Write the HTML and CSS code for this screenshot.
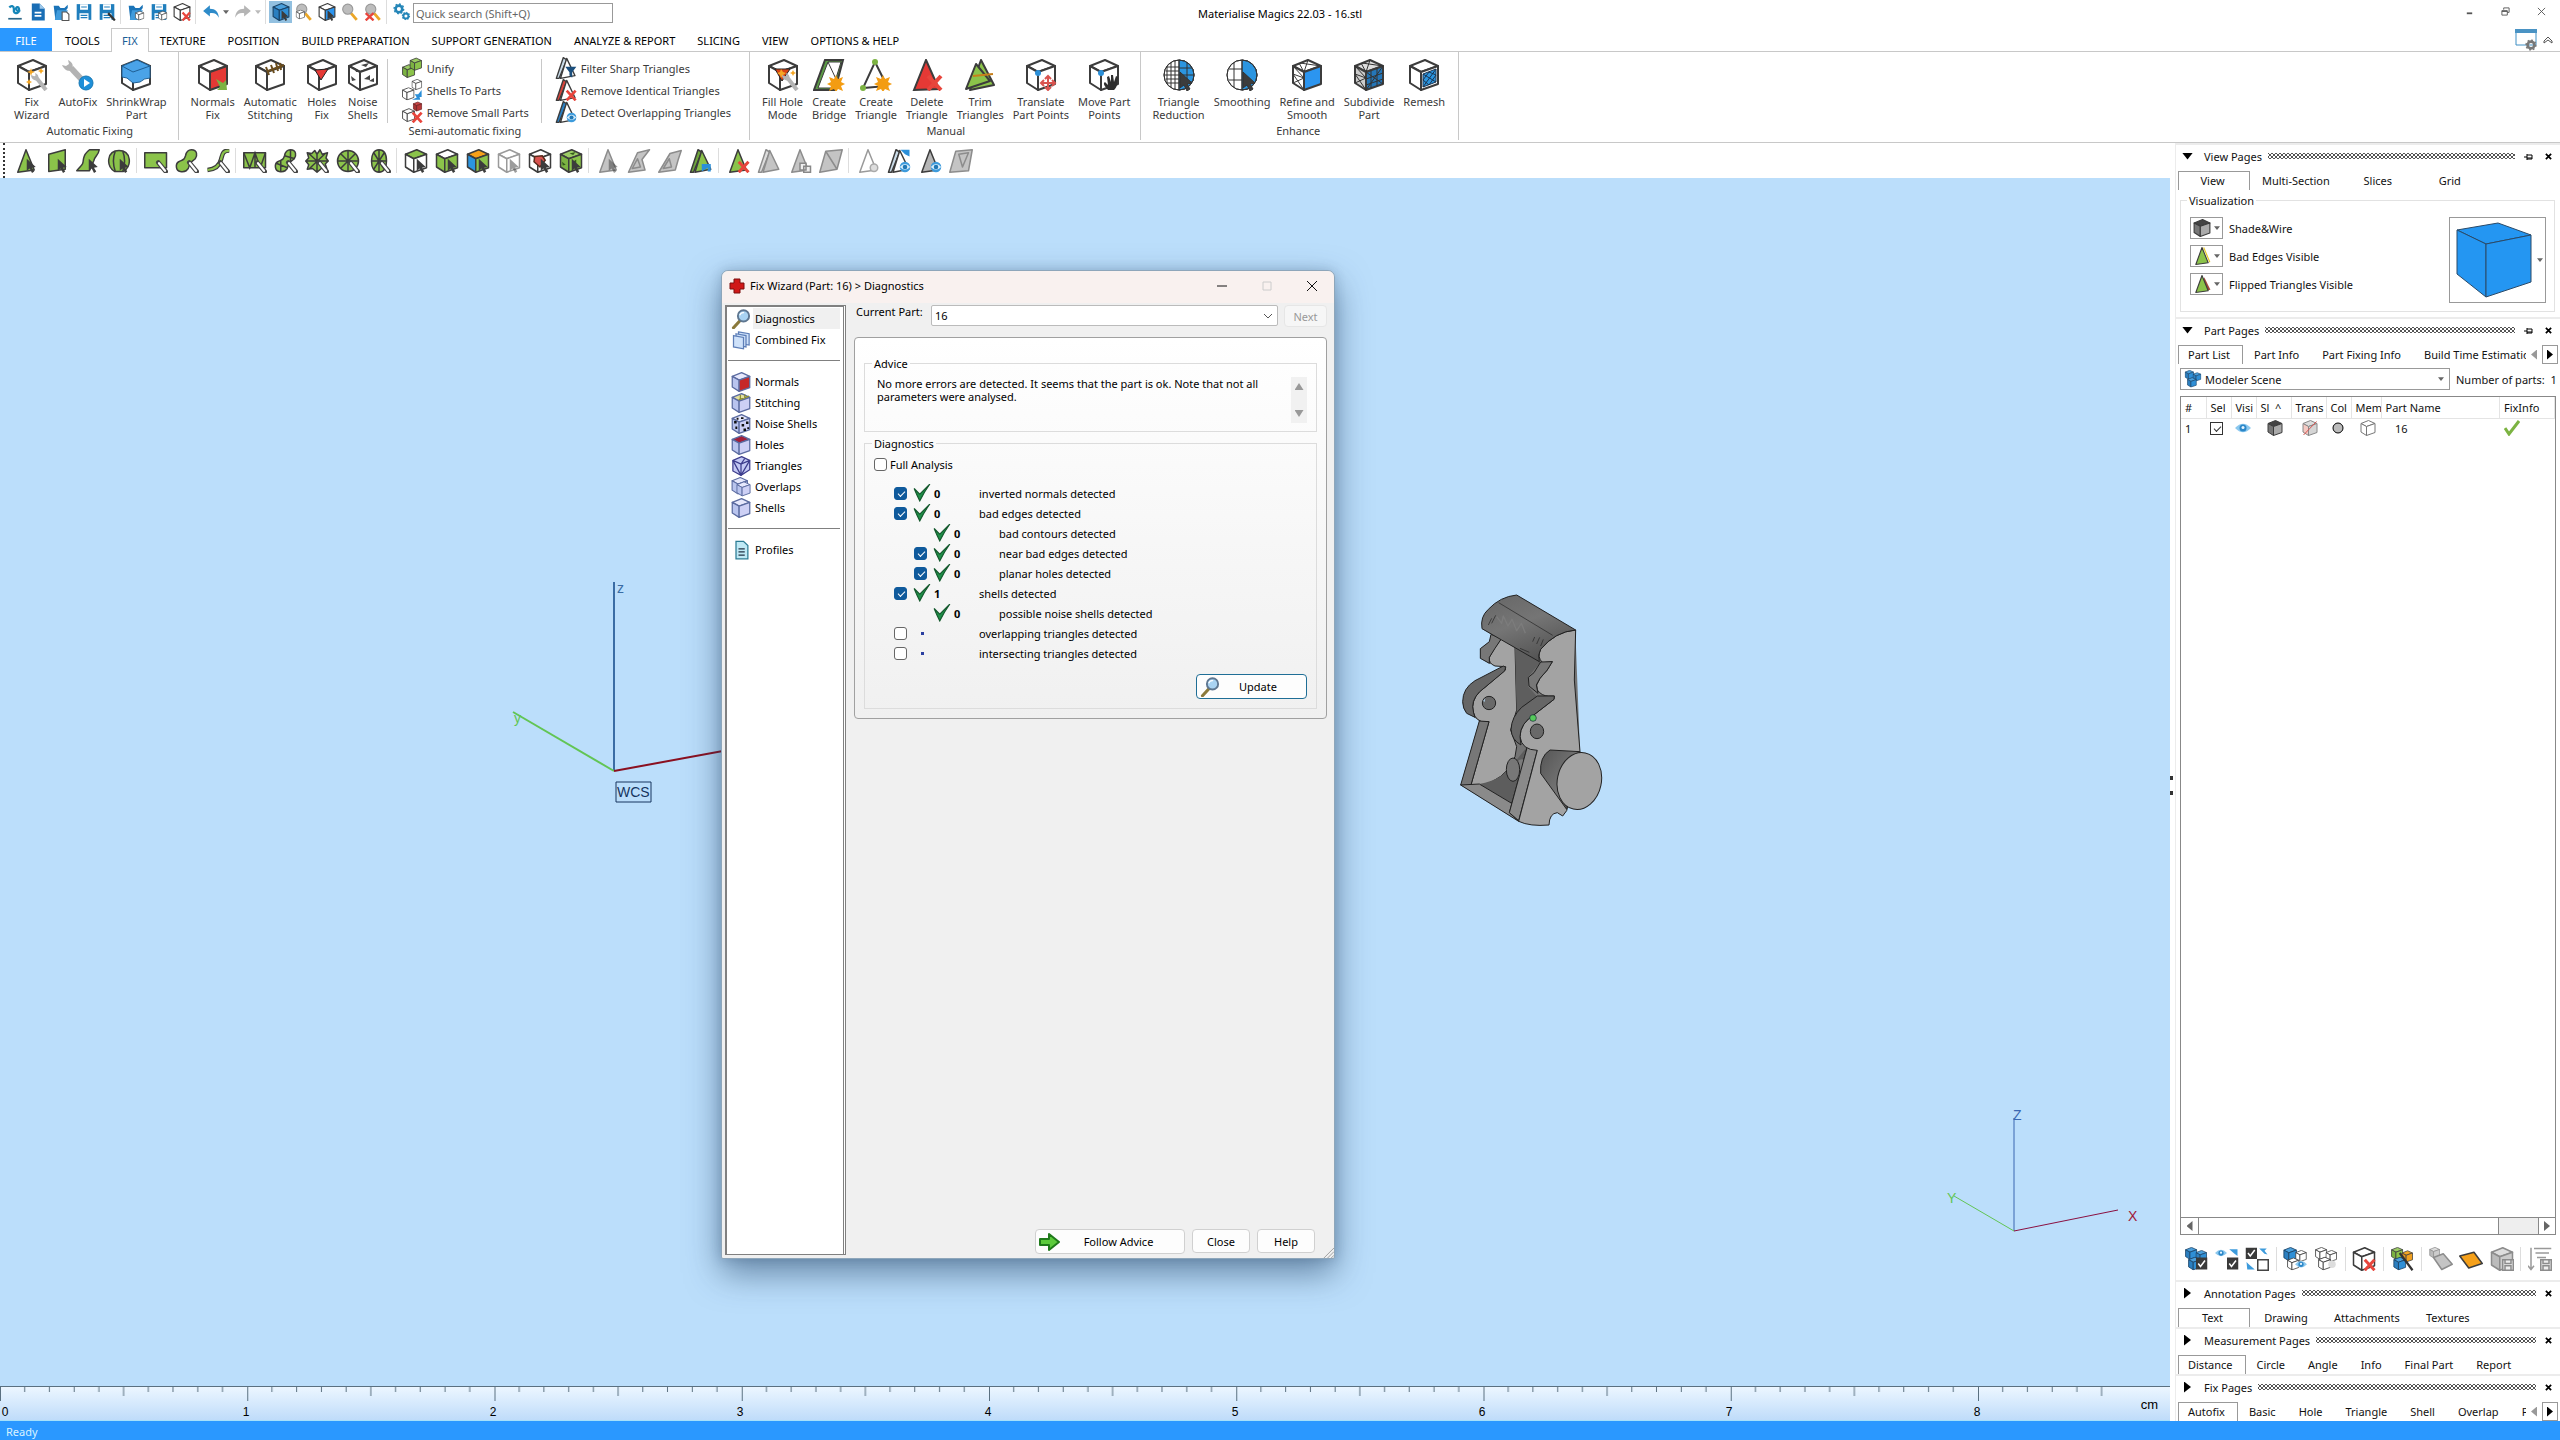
FILE: index.html
```html
<!DOCTYPE html>
<html lang="en">
<head>
  <meta charset="UTF-8" />
  <meta name="viewport" content="width=device-width, initial-scale=1" />
  <title>Materialise Magics 22.03 - 16.stl</title>
  <link rel="stylesheet" href="styles.css">
</head>
<body>

<!-- shared icon parts -->
<svg class="defs" aria-hidden="true">
  <symbol id="cube" viewBox="0 0 32 32">
    <path class="ft" d="M17 1 30 7 13 13 2 7z"/>
    <path class="fl" d="M2 7 13 13V31L2 24z"/>
    <path class="fr" d="M13 13 30 7V25L13 31z"/>
  </symbol>
  <symbol id="cubes" viewBox="0 0 32 32">
    <use href="#cube" x="1" y="0" width="17" height="17"/>
    <use href="#cube" x="15" y="4" width="16" height="16"/>
    <use href="#cube" x="5" y="13" width="18" height="18"/>
  </symbol>
  <symbol id="cursor" viewBox="0 0 32 32"><path fill="#3c3c3c" d="M17 13V29l4-3 3 6 3-2-3-5 5-1z"/></symbol>
  <symbol id="brush" viewBox="0 0 32 32"><path d="M19 18 29 30" stroke="#444" stroke-width="6" stroke-linecap="round"/><path d="M20 19 28 29" stroke="#fff" stroke-width="3" stroke-linecap="round"/></symbol>
  <symbol id="redx" viewBox="0 0 32 32"><path d="M17 17 30 31M30 17 17 31" stroke="#e8453c" stroke-width="4"/></symbol>
  <symbol id="burst" viewBox="0 0 32 32"><path fill="#f39c12" d="m23 16 2 4 5-2-2 5 4 2-4 2 2 5-5-2-2 3-2-3-5 2 2-5-4-2 4-2-2-5 5 2z"/></symbol>
  <symbol id="wrench" viewBox="0 0 32 32"><path d="M19 17 30 31" stroke="#b5b5b5" stroke-width="4"/><path d="M15 16c0 5 6 7 7 4s0-5-3-6l1 4z" fill="#b5b5b5"/></symbol>
  <symbol id="eye" viewBox="0 0 32 32"><path d="M0 16Q16-1 32 16 16 33 0 16z" fill="#8cc8ee"/><circle cx="16" cy="16" r="7" fill="#2b87c8"/><circle cx="16" cy="15" r="3" fill="#e8f5ff"/></symbol>
  <symbol id="eyeball" viewBox="0 0 32 32"><circle cx="24" cy="24" r="7" fill="#3d9bdc"/><path d="M17 24q7-8 14 0-7 7-14 0z" fill="#d6ecfa"/><circle cx="24" cy="24" r="3" fill="#2178b5"/></symbol>
  <symbol id="glass" viewBox="0 0 32 32"><path d="M15 18 4 30" stroke="#8b7a3c" stroke-width="5" stroke-linecap="round"/><circle cx="20" cy="11" r="9" fill="#a9d3f2" stroke="#5e7690" stroke-width="3"/><path d="M14 10q2-5 7-4" stroke="#fff" stroke-width="2" fill="none"/></symbol>
  <symbol id="zoomer" viewBox="0 0 32 32"><path d="M17 17 28 30" stroke="#eba627" stroke-width="5"/><circle cx="12" cy="11" r="9" fill="#bdbdbd" stroke="#999" stroke-width="2"/></symbol>
  <symbol id="tri" viewBox="0 0 32 32"><path class="fa" d="M16 1 27 28 5 31z"/></symbol>
  <symbol id="tri2" viewBox="0 0 32 32"><path class="fb" d="M12 1 2 31 6 31 17 4z"/><path class="fa" d="M17 2 29 27 8 31z"/></symbol>
  <symbol id="folder" viewBox="0 0 32 32"><path fill="#1b74b8" d="M3 5h9l3 4h7l6-6v6l-3 4v17H6z"/><path fill="#3f9bdc" d="M9 13h19l-6 17H5z"/></symbol>
  <symbol id="disk" viewBox="0 0 32 32"><path fill="#1f7ebd" d="M3 2h26v28H3z"/><path fill="#fff" d="M9 2h14v10H9zM8 18h16v12H8z"/><path d="M10 22h12M10 26h12M11 7h10" stroke="#1f7ebd" stroke-width="2"/></symbol>
  <symbol id="box" viewBox="0 0 32 32"><path d="M16 14h15v16H16z" fill="#3a3a3a"/><path d="m19 22 3 4 6-8" stroke="#fff" stroke-width="2" fill="none"/></symbol>
  <symbol id="floppy" viewBox="0 0 32 32"><path d="M17 17h14v14H17z" fill="#eee" stroke="#8c8c8c" stroke-width="2"/><path d="M20 17v5h8v-5M20 31v-6h8v6" fill="none" stroke="#8c8c8c" stroke-width="2"/></symbol>
  <symbol id="wheel" viewBox="0 0 32 32"><circle class="fa" cx="16" cy="16" r="14"/><path class="fa" d="M16 2V30M2 16H30M6 6 26 26M26 6 6 26"/></symbol>
  <symbol id="tick" viewBox="0 0 16 16"><path fill="#1e9048" stroke="#15592e" d="M1 4 6 9 15 0Q10 7 6 15 3 9 1 4z"/></symbol>
  <symbol id="gear" viewBox="0 0 32 32"><circle cx="16" cy="16" r="9" fill="none" stroke-width="7"/><circle cx="16" cy="16" r="13" fill="none" stroke-width="4" stroke-dasharray="5 5"/></symbol>
  <symbol id="pin" viewBox="0 0 9 9"><path d="M0 5h3M3 2v6M3 3h5v4H3M3 6h5" stroke="#000" fill="none"/></symbol>
  <symbol id="cross" viewBox="0 0 8 8"><path d="m1 1 6 6M7 1 1 7" stroke="#000" stroke-width="2"/></symbol>
  <symbol id="down" viewBox="0 0 8 5"><path d="M0 0h8L4 5z"/></symbol>
</svg>

<header class="titlebar">
  <div class="quick">
    <button aria-label="Magics"><svg class="i18" viewBox="0 0 32 32"><path d="M6 8c3-4 8-3 8 2v5c2 6 11 3 9-5-1-4-6-3-5 1s5 4 7 2" fill="none" stroke="#1586b8" stroke-width="4"/><path d="M4 28h24" stroke="#2b6686" stroke-width="3"/></svg></button>
    <button aria-label="New"><svg class="i18" viewBox="0 0 32 32"><path fill="#1a6eb5" d="M5 1h14l9 9v21H5z"/><path fill="#9fc9ea" d="M19 1v9h9z"/><path d="M10 17h12M10 23h12" stroke="#fff" stroke-width="3"/></svg></button>
    <button aria-label="Open"><svg class="i18" viewBox="0 0 32 32"><use href="#folder"/><path fill="#fff" stroke="#555" stroke-width="2" d="M18 16h8l4 4v11H18z"/></svg></button>
    <button aria-label="Save"><svg class="i18"><use href="#disk"/></svg></button>
    <button aria-label="Save as"><svg class="i18" viewBox="0 0 32 32"><use href="#disk"/><path d="m30 31-12-13" stroke="#333" stroke-width="4"/></svg></button>
    <i class="vsep"></i>
    <button aria-label="Import part"><svg class="i18" viewBox="0 0 32 32"><use href="#folder"/><use href="#cube" x="14" y="14" width="17" height="17"/></svg></button>
    <button aria-label="Save part"><svg class="i18" viewBox="0 0 32 32"><use href="#disk"/><use href="#cube" x="14" y="14" width="17" height="17"/></svg></button>
    <button aria-label="Unload part"><svg class="i18" viewBox="0 0 32 32"><use href="#cube"/><use href="#redx"/></svg></button>
    <i class="vsep"></i>
    <button class="drop" aria-label="Undo"><svg class="i18" viewBox="0 0 32 32"><path fill="#2e8bc9" d="M2 14 14 4v6c10 0 15 5 16 16-4-7-8-9-16-8v6z"/></svg><svg class="arr"><use href="#down"/></svg></button>
    <button class="drop off" aria-label="Redo"><svg class="i18" viewBox="0 0 32 32"><path fill="#b5b5b5" d="M30 14 18 4v6C8 10 3 15 2 26c4-7 8-9 16-8v6z"/></svg><svg class="arr"><use href="#down"/></svg></button>
    <i class="vsep"></i>
    <button class="on" aria-label="Select part"><svg class="i18 blue" viewBox="0 0 32 32"><use href="#cube"/><use href="#cursor"/></svg></button>
    <button aria-label="Zoom part"><svg class="i18" viewBox="0 0 32 32"><use href="#zoomer"/><use href="#cube" x="1" y="12" width="17" height="17"/></svg></button>
    <button aria-label="View cube"><svg class="i18 right-blue" viewBox="0 0 32 32"><use href="#cube"/><use href="#cursor"/></svg></button>
    <button aria-label="Zoom"><svg class="i18"><use href="#zoomer"/></svg></button>
    <button aria-label="Unzoom"><svg class="i18" viewBox="0 0 32 32"><use href="#zoomer"/><path d="m3 18 14 13M17 18 3 31" stroke="#e8453c" stroke-width="4"/></svg></button>
    <i class="vsep"></i>
    <button aria-label="Settings"><svg class="i18" viewBox="0 0 32 32" stroke="#2586b8"><use href="#gear" width="21" height="21"/><use href="#gear" x="15" y="15" width="16" height="16"/></svg></button>
    <input class="search" type="text" placeholder="Quick search (Shift+Q)" aria-label="Quick search">
  </div>
  <h1>Materialise Magics 22.03 - 16.stl</h1>
  <div class="winbtns">
    <button aria-label="Minimize"><svg viewBox="0 0 10 10"><path d="M2 7h6" stroke-width="2"/></svg></button>
    <button aria-label="Restore"><svg viewBox="0 0 10 10"><path d="M3 3V1h6v5H7M1 4h6v5H1zM1 5h6"/></svg></button>
    <button aria-label="Close"><svg viewBox="0 0 10 10"><path d="m1 1 8 8M9 1 1 9"/></svg></button>
  </div>
</header>

<nav class="menu">
  <a class="file" href="#">FILE</a>
  <a href="#">TOOLS</a>
  <a class="active" href="#">FIX</a>
  <a href="#">TEXTURE</a>
  <a href="#">POSITION</a>
  <a href="#">BUILD PREPARATION</a>
  <a href="#">SUPPORT GENERATION</a>
  <a href="#">ANALYZE &amp; REPORT</a>
  <a href="#">SLICING</a>
  <a href="#">VIEW</a>
  <a href="#">OPTIONS &amp; HELP</a>
  <div class="menu-right">
    <svg width="22" height="22" viewBox="0 0 22 22"><path d="M1 1h20v15H1z" fill="#fff" stroke="#3f8fc4"/><path d="M0 0h22v4H0z" fill="#4a93c4"/><g stroke="#777"><use href="#gear" x="10" y="10" width="12" height="12"/></g></svg>
    <svg width="10" height="8" viewBox="0 0 10 8"><path d="m1 5 4-4 4 4v2L5 4 1 7z" fill="#fff" stroke="#555"/></svg>
  </div>
</nav>

<section class="ribbon">
  <div class="group">
    <div class="tools">
      <button class="big"><svg class="i32" viewBox="0 0 32 32"><use href="#cube"/><path fill="#f5a623" d="m15 9 1 3 3 1-3 1-1 3-1-3-3-1 3-1zM25 9l1 2 2 1-2 1-1 2-1-2-2-1 2-1zM13 20l1 2 2 1-2 1-1 2-1-2-2-1 2-1z"/><use href="#wrench"/></svg>Fix<br>Wizard</button>
      <button class="big"><svg class="i32" viewBox="0 0 32 32"><path d="M9 9 22 23" stroke="#b3b3b3" stroke-width="6"/><path d="M6 1c4 2 6 5 4 9S2 11 0 6l4 1 3-2z" fill="#b3b3b3"/><circle cx="24" cy="24" r="7" fill="#1e8fd8" stroke="#1678b5"/><path fill="#fff" d="m22 20 6 4-6 4z"/></svg>AutoFix</button>
      <button class="big"><svg class="i32" viewBox="0 0 32 32"><use href="#cube"/><path d="M17 1 30 7V19Q24 19 20 23L13 24 7 19 2 18V7z" fill="#4aa3e8" stroke="#1f5f94"/><path d="m2 7 11 6 17-6" fill="none" stroke="#1f5f94"/></svg>ShrinkWrap<br>Part</button>
    </div>
    <div class="caption">Automatic Fixing</div>
  </div>

  <div class="group">
    <div class="tools">
      <button class="big"><svg class="i32 right-red" viewBox="0 0 32 32"><use href="#cube"/><path fill="#7cb342" d="m19 20 7 4 3-3 1 10H20l3-3z"/></svg>Normals<br>Fix</button>
      <button class="big"><svg class="i32" viewBox="0 0 32 32"><use href="#cube"/><path d="M14 12 30 6M12 8l3 8M17 6l3 8M22 4l2 8M26 4l1 7" stroke="#6b4d1d" stroke-width="2"/></svg>Automatic<br>Stitching</button>
      <button class="big"><svg class="i32" viewBox="0 0 32 32"><use href="#cube"/><path d="M9 11 22 10 15 21z" fill="#e53935" stroke="#222"/></svg>Holes<br>Fix</button>
      <button class="big"><svg class="i32" viewBox="0 0 32 32"><use href="#cube"/><path fill="#444" d="m14 6 8-2-3 4zM4 17l5 4-4 1zM17 20l6-4v5zM22 22l5-3v4zM8 10l4 3H9z"/></svg>Noise<br>Shells</button>
      <i class="tsep"></i>
      <div class="stack">
        <button><svg class="i22 green" viewBox="0 0 32 32"><use href="#cube" x="1" y="10" width="20" height="21"/><use href="#cube" x="12" y="0" width="19" height="21"/></svg>Unify</button>
        <button><svg class="i22" viewBox="0 0 32 32"><use href="#cube" x="15" y="0" width="16" height="16"/><use href="#cube" x="1" y="12" width="19" height="19"/><path fill="#2b8fd8" d="M30 16v10h-3l1 4H16l7-3-3-5h5z"/></svg>Shells To Parts</button>
        <button><svg class="i22" viewBox="0 0 32 32"><use href="#cube" x="1" y="10" width="20" height="21"/><g class="red"><use href="#cube" x="17" y="0" width="14" height="16"/></g><use href="#redx"/></svg>Remove Small Parts</button>
      </div>
      <i class="tsep"></i>
      <div class="stack">
        <button><svg class="i22 light" viewBox="0 0 32 32"><use href="#tri2"/><path fill="#1b4f7d" d="M15 14h16l-6 8v8l-4-3v-5z"/></svg>Filter Sharp Triangles</button>
        <button><svg class="i22 redb" viewBox="0 0 32 32"><use href="#tri2"/><use href="#redx"/></svg>Remove Identical Triangles</button>
        <button><svg class="i22 blueb" viewBox="0 0 32 32"><use href="#tri2"/><use href="#eyeball"/></svg>Detect Overlapping Triangles</button>
      </div>
    </div>
    <div class="caption">Semi-automatic fixing</div>
  </div>

  <div class="group">
    <div class="tools">
      <button class="big"><svg class="i32" viewBox="0 0 32 32"><use href="#cube"/><path d="M8 10 23 10 15 22z" fill="#d84315" stroke="#222"/><path fill="#f5a623" d="m14 10 2 3 3 1-3 2-2 3-1-3-3-2 3-1zM26 11l1 2 2 1-2 1-1 2-1-2-2-1 2-1z"/><use href="#wrench"/></svg>Fill Hole<br>Mode</button>
      <button class="big"><svg class="i32" viewBox="0 0 32 32"><path d="M12 1h18l-8 30H1z" fill="#5c9c46" stroke="#3c3c3c" stroke-width="2"/><path d="M15 3h13l-8 26H5z" fill="#fff" stroke="#3c3c3c"/><path d="m15 3 8 17" stroke="#3c3c3c"/><use href="#burst"/></svg>Create<br>Bridge</button>
      <button class="big"><svg class="i32" viewBox="0 0 32 32"><path d="M15 3 27 27 3 29z" fill="#fff" stroke="#3c3c3c" stroke-width="2"/><g fill="#7cb342"><circle cx="15" cy="3" r="3"/><circle cx="3" cy="29" r="3"/></g><use href="#burst"/></svg>Create<br>Triangle</button>
      <button class="big"><svg class="i32" viewBox="0 0 32 32"><path d="M15 1 28 30 3 31z" fill="#e53935" stroke="#3c3c3c" stroke-width="2"/><use href="#redx"/></svg>Delete<br>Triangle</button>
      <button class="big"><svg class="i32 green" viewBox="0 0 32 32"><path class="fa" d="M17 1 30 26 6 31z"/><path class="fa" d="M12 5 26 22 2 30z"/><path d="M9 17l20-2" stroke="#c77f1a" stroke-width="2"/></svg>Trim<br>Triangles</button>
      <button class="big"><svg class="i32" viewBox="0 0 32 32"><use href="#cube"/><circle cx="13" cy="14" r="3" fill="#2b8fd8"/><path d="M23 17v14M16 24h14M20 20l3-3 3 3M20 28l3 3 3-3M19 21l-3 3 3 3M27 21l3 3-3 3" stroke="#d9534f" stroke-width="2" fill="none"/></svg>Translate<br>Part Points</button>
      <button class="big"><svg class="i32" viewBox="0 0 32 32"><use href="#cube"/><circle cx="13" cy="14" r="3" fill="#2b8fd8"/><path fill="#2e2e2e" d="M20 31c-2-3-6-6-3-8l3 3-1-8 2-1 2 6 0-7h2l1 7 2-6 2 1-1 8c-1 3-2 4-3 5z"/></svg>Move Part<br>Points</button>
    </div>
    <div class="caption">Manual</div>
  </div>

  <div class="group">
    <div class="tools">
      <button class="big"><svg class="i32 grid" viewBox="0 0 32 32"><circle cx="16" cy="16" r="15" fill="#fff"/><path d="M16 1a15 15 0 0 1 0 30z" fill="#2b95e0"/><path d="M16 1V31M1 16H31M8 4V28M12 2V30M4 8v16M3 8h13M3 12h13M3 20h13M3 24h13M24 4v24M16 9h13M16 23h13" fill="none"/><circle cx="16" cy="16" r="15" fill="none"/><use href="#cursor"/></svg>Triangle<br>Reduction</button>
      <button class="big"><svg class="i32 grid" viewBox="0 0 32 32"><circle cx="16" cy="16" r="15" fill="#fff"/><path d="M16 1a15 15 0 0 1 0 30z" fill="#2b95e0"/><path d="M16 1V31M8 4V28M3 10h13M3 21h13" fill="none"/><circle cx="16" cy="16" r="15" fill="none"/><use href="#cursor"/></svg>Smoothing</button>
      <button class="big"><svg class="i32 right-blue" viewBox="0 0 32 32"><use href="#cube"/><path d="M17 1 13 13 8 4M30 7 9 4M2 7l11 12L2 15 13 31M2 24l11-5" stroke="#3c3c3c" fill="none"/></svg>Refine and<br>Smooth</button>
      <button class="big"><svg class="i32 right-navy" viewBox="0 0 32 32"><use href="#cube"/><path d="M17 1 13 13 8 4M30 7 9 4M2 7l11 12L2 15 13 31M2 24l11-5M13 20 30 14M13 26l17-6M18 11v18M24 9v18M13 13l17 12M13 31 30 7" stroke="#333" fill="none"/></svg>Subdivide<br>Part</button>
      <button class="big"><svg class="i32" viewBox="0 0 32 32"><use href="#cube"/><path d="m15 15 13-5v13l-13 5z" fill="#2b95e0" stroke="#1b3550"/><path d="m15 15 13 8M15 28l13-18M21 13l-6 8 6 5 7-10z" stroke="#1b3550" fill="none"/></svg>Remesh</button>
    </div>
    <div class="caption">Enhance</div>
  </div>
</section>

<main class="workspace">
  <div class="left">
    <div class="toolbar">
      <button aria-label="Mark triangle"><svg class="i24 green" viewBox="0 0 32 32"><use href="#tri"/><use href="#cursor"/></svg></button>
      <button aria-label="Mark plane"><svg class="i24 green" viewBox="0 0 32 32"><path class="fa" d="M5 7 27 1V27L5 30z"/><use href="#cursor"/></svg></button>
      <button aria-label="Mark surface"><svg class="i24 green" viewBox="0 0 32 32"><path class="fa" d="M18 1h13C30 8 25 10 24 15l-6 14H1c7-9 8-6 9-16 1-6 4-9 8-12z"/><use href="#cursor"/></svg></button>
      <button aria-label="Mark shell"><svg class="i24 green" viewBox="0 0 32 32"><path class="fa" d="M10 30C-2 22 0 2 16 2s18 20 6 28z"/><path class="fa" d="M11 3c-4 10-3 18 0 27M21 3c4 10 3 18 0 27"/><use href="#cursor"/></svg></button>
      <i class="vsep"></i>
      <button aria-label="Rectangle mark"><svg class="i24 green" viewBox="0 0 32 32"><path class="fa" d="M1 5h29v20H1z"/><use href="#brush"/></svg></button>
      <button aria-label="Free form mark"><svg class="i24 green" viewBox="0 0 32 32"><path class="fa" d="M22 1c8 0 8 8 5 12-4 4-6 3-8 9-1 7-6 9-12 8s-7-10-2-13c6-3 7-2 9-8 1-5 4-8 8-8z"/><use href="#brush"/></svg></button>
      <button aria-label="Line mark"><svg class="i24 green" viewBox="0 0 32 32"><path d="M31 2C22 2 22 7 20 14 18 23 12 27 2 28" fill="none" stroke="#3c3c3c" stroke-width="6"/><path d="M31 2C22 2 22 7 20 14 18 23 12 27 2 28" fill="none" stroke="#8bc34a" stroke-width="3"/><use href="#brush"/></svg></button>
      <i class="vsep"></i>
      <button aria-label="Window triangles"><svg class="i24 green" viewBox="0 0 32 32"><path class="fa" d="M1 5h29v20H1z"/><path d="M1 5l8 20 7-20 7 20 7-20M16 5v20" fill="none" stroke="#3c3c3c" stroke-width="2"/><use href="#brush"/></svg></button>
      <button aria-label="Free form triangles"><svg class="i24 green" viewBox="0 0 32 32"><path class="fa" d="M22 1c8 0 8 8 5 12-4 4-6 3-8 9-1 7-6 9-12 8s-7-10-2-13c6-3 7-2 9-8 1-5 4-8 8-8zM14 9l14 4M3 19l15 6M22 1v16M9 15v15"/><use href="#brush"/></svg></button>
      <button aria-label="Star mark"><svg class="i24 green" viewBox="0 0 32 32"><path class="fa" d="m16 7 4-6 3 6 7-2-2 7 3 4-4 4 2 6-6-1-7 6-6-5-7 1 2-6-4-5 4-4-2-7 6 1 4-4zM5 6l22 20M27 6 5 27M16 7v24M2 16h29"/><use href="#brush"/></svg></button>
      <button aria-label="Circle mark"><svg class="i24 green" viewBox="0 0 32 32"><use href="#wheel"/><use href="#brush"/></svg></button>
      <button aria-label="Ellipse mark"><svg class="i24 green" viewBox="0 0 32 32"><path class="fa" d="M16 1C24 1 26 8 26 16s-3 15-10 15S6 24 6 16 9 1 16 1zM16 1v30M6 16h20M9 5l14 22M23 5 9 27"/><use href="#brush"/></svg></button>
      <i class="vsep"></i>
      <button aria-label="Mark top"><svg class="i24 top-green" viewBox="0 0 32 32"><use href="#cube"/><use href="#cursor"/></svg></button>
      <button aria-label="Mark side"><svg class="i24 side-green" viewBox="0 0 32 32"><use href="#cube"/><use href="#cursor"/></svg></button>
      <button aria-label="Mark by color"><svg class="i24 multi" viewBox="0 0 32 32"><use href="#cube"/><use href="#cursor"/></svg></button>
      <button aria-label="Unmark"><svg class="i24 ghost" viewBox="0 0 32 32"><use href="#cube"/><use href="#cursor"/></svg></button>
      <button aria-label="Mark holes"><svg class="i24" viewBox="0 0 32 32"><use href="#cube"/><path fill="#d9534f" stroke="#5a2a1a" stroke-width="2" d="m9 10 10-1 4 6-7 9-8-7z"/><use href="#cursor"/></svg></button>
      <button aria-label="Mark noise"><svg class="i24 green" viewBox="0 0 32 32"><use href="#cube"/><path fill="#345c1c" d="m14 6 8-2-3 4zM4 17l5 4-4 1zM17 18l6-4v5z"/><use href="#cursor"/></svg></button>
      <i class="vsep"></i>
      <button aria-label="Unmark triangle"><svg class="i24 gray" viewBox="0 0 32 32"><use href="#tri"/><use href="#cursor"/></svg></button>
      <button aria-label="Grow"><svg class="i24 gray" viewBox="0 0 32 32"><path class="fa" d="M14 5 30 1 20 14l4 14-22 3z"/><path class="fa" d="m14 13 4 11-11 2z"/></svg></button>
      <button aria-label="Shrink"><svg class="i24 gray" viewBox="0 0 32 32"><path class="fa" d="M16 6 31 2 27 14l-4 14-22 3z"/><path class="fa" d="m15 13 3 11-11 2z"/></svg></button>
      <button aria-label="Invert marking"><svg class="i24 green" viewBox="0 0 32 32"><use href="#tri2"/><path fill="#2b8fd8" d="M17 20h12v10h-4v-5l-8 5z"/></svg></button>
      <i class="vsep"></i>
      <button aria-label="Delete marked"><svg class="i24 green" viewBox="0 0 32 32"><use href="#tri"/><use href="#redx"/></svg></button>
      <button aria-label="Separate"><svg class="i24 gray" viewBox="0 0 32 32"><use href="#tri2"/></svg></button>
      <button aria-label="Copy marked"><svg class="i24 gray" viewBox="0 0 32 32"><use href="#tri"/><path d="M16 19h8v9h-8zM21 23h9v8h-9z" fill="#eee" stroke="#888" stroke-width="2"/></svg></button>
      <button aria-label="Divide"><svg class="i24 gray" viewBox="0 0 32 32"><path class="fa" d="M9 3 31 1 24 27 1 31zM9 3l15 24"/></svg></button>
      <i class="vsep"></i>
      <button aria-label="Hide"><svg class="i24 ghost" viewBox="0 0 32 32"><use href="#tri"/><circle cx="24" cy="25" r="5" fill="#ddd" stroke="#aaa" stroke-width="2"/></svg></button>
      <button aria-label="Invert visibility"><svg class="i24 light" viewBox="0 0 32 32"><use href="#tri2"/><path fill="#2b8fd8" d="M18 1h12v9l-6-3z"/><use href="#eyeball"/></svg></button>
      <button aria-label="Show"><svg class="i24 mid" viewBox="0 0 32 32"><use href="#tri"/><use href="#eyeball"/></svg></button>
      <button aria-label="Show all"><svg class="i24 gray" viewBox="0 0 32 32"><path class="fa" d="M9 3 31 1 26 29 1 31z"/><path class="fa" d="m13 7 13-2-8 19z"/></svg></button>
    </div>

    <div class="viewport">
      <svg class="wcs" viewBox="0 0 260 220">
        <path d="M103 189V0" stroke="#3a6ca4" stroke-width="2"/>
        <path d="M103 189 2 130" stroke="#62c554" stroke-width="2"/>
        <path d="M103 189 250 162" stroke="#8a1020" stroke-width="2"/>
        <text x="106" y="11" fill="#3a6ca4">z</text>
        <text x="3" y="141" fill="#62c554">y</text>
        <text x="106" y="215" fill="#16355e">WCS</text>
        <path d="M105 200h35v20h-35z" fill="none" stroke="#16355e"/>
      </svg>

      <svg class="model" viewBox="0 0 660 840">
        <defs>
          <linearGradient id="roll" x1="0" y1="0" x2="0.5" y2="1"><stop offset="0" stop-color="#666"/><stop offset="0.5" stop-color="#757575"/><stop offset="1" stop-color="#555"/></linearGradient>
          <linearGradient id="knob" x1="0" y1="0" x2="1" y2="1"><stop offset="0" stop-color="#555"/><stop offset="0.6" stop-color="#777"/><stop offset="1" stop-color="#444"/></linearGradient>
        </defs>
        <g stroke="#222" stroke-width="3" stroke-linejoin="round">
          <path fill="#747474" d="M186 176 213 193 208 215 181 236V265L210 282 250 290 160 337Q128 358 128 400 130 430 160 440L178 453 122 645 296 754 350 540 480 545 466 180z" stroke="none"/>
          <path fill="#a3a3a3" d="M245 205 285 232 290 420 272 480 290 530 285 560 262 600Q230 640 150 655L207 455H185Q158 445 158 410 160 375 195 352L256 300 257 290 225 288Q205 280 208 262L225 232z"/>
          <path fill="#5e5e5e" d="M285 232 362 276 325 320V350L352 380 300 420 290 425z" stroke="none"/>
          <path fill="#777" d="M213 193 245 205 225 235 208 262V280L181 265V236L208 215z"/>
          <path fill="#666" d="M250 288 257 292 254 303 195 352Q158 378 158 410 160 430 165 442L140 430Q128 415 128 395 128 355 165 332z"/>
          <circle cx="207" cy="399" r="20" fill="#696969"/>
          <path d="m190 392 6-7-3 12z" fill="#b9defa" stroke="none"/>
          <path fill="#777" d="M178 453 207 455 150 655 122 645z"/>
          <path fill="#5d5d5d" d="M178 642Q250 630 285 575L322 530 275 700z" stroke="none"/>
          <path fill="#8a8a8a" d="M122 645 178 642 275 700 350 540 322 530 268 728 296 754z"/>
          <ellipse cx="305" cy="598" rx="20" ry="30" fill="#7b7b7b" stroke="none"/>
          <ellipse cx="279" cy="599" rx="20" ry="35" fill="#777"/>
          <path fill="#8a8a8a" d="M322 530 352 540 296 752 268 728z"/>
          <path fill="#a3a3a3" d="M467 180Q405 185 362 238 350 262 368 278L397 275Q385 300 360 325L350 345 352 360Q365 378 385 378L403 378 402 388 345 432Q300 460 300 500 305 540 352 541L296 754Q330 770 387 765 388 730 412 728L428 738 440 722 480 545 463 330z"/>
          <path fill="#777" d="M362 276 397 275Q385 300 360 325L349 345 354 370 327 348 325 322 342 308z"/>
          <path fill="#666" d="M352 378 403 378 402 388 345 432Q300 460 300 500L303 525Q275 510 273 478 275 440 305 412z"/>
          <path fill="url(#roll)" d="M186 176Q180 140 205 118 240 80 290 75L467 180Q405 185 362 238 352 255 358 275L245 210z"/>
          <path d="M236 98 398 196M205 165l10-20M215 160l12-24M338 215l6-14M350 222l9-20M362 228l8-20M300 235l28 12" fill="none" stroke-width="2"/>
          <path d="m230 140 15 20 5-22 14 30 12-20 14 34 14-22 12 30" fill="none" stroke="#7c7c7c" stroke-width="4"/>
          <ellipse cx="351" cy="484" rx="20" ry="22" fill="#696969"/>
          <path fill="url(#knob)" d="M480 545 390 540Q358 560 362 610L440 718z"/>
          <ellipse cx="478" cy="633" rx="66" ry="86" fill="#a3a3a3" transform="rotate(12 478 633)"/>
        </g>
        <circle cx="339" cy="444" r="10" fill="#55c95a" stroke="#123" stroke-width="2"/>
      </svg>

      <svg class="gizmo" viewBox="0 0 200 130">
        <path d="M66 122V9" stroke="#3a66b0"/>
        <path d="M66 122 6 87" stroke="#62c554"/>
        <path d="M66 122 170 101" stroke="#8a1040"/>
        <text x="65" y="11" fill="#3a66b0">Z</text>
        <text x="-1" y="94" fill="#62c554">Y</text>
        <text x="180" y="112" fill="#a01838">X</text>
      </svg>

      <section class="dialog" aria-label="Fix Wizard">
        <div class="dlg-title">
          <svg width="16" height="16" viewBox="0 0 16 16"><path fill="#d01818" stroke="#7c0f0f" d="M5 1h6v4h4v6h-4v4H5v-4H1V5h4z"/></svg>
          <span>Fix Wizard (Part: 16) &gt; Diagnostics</span>
          <div class="dlg-btns">
            <button aria-label="Minimize"><svg viewBox="0 0 12 12"><path d="M1 6h10"/></svg></button>
            <button aria-label="Maximize" disabled><svg viewBox="0 0 12 12"><path d="M2 2h8v8H2z"/></svg></button>
            <button aria-label="Close"><svg viewBox="0 0 12 12"><path d="m1 1 10 10M11 1 1 11"/></svg></button>
          </div>
        </div>
        <div class="dlg-body">
          <nav class="steps">
            <a class="sel" href="#"><svg class="i20"><use href="#glass"/></svg><span>Diagnostics</span></a>
            <a href="#"><svg class="i20" viewBox="0 0 32 32" fill="#cfe2fa" stroke="#5e7fb8" stroke-width="2"><path d="M12 3 29 6V24L12 21z"/><path d="M8 6 24 9V27L8 24z"/><path d="M4 9 20 12V30L4 27z"/></svg><span>Combined Fix</span></a>
            <hr>
            <a href="#"><svg class="i20 lav lav-red"><use href="#cube"/></svg><span>Normals</span></a>
            <a href="#"><svg class="i20 lav lav-top" viewBox="0 0 32 32"><use href="#cube"/><path d="M12 11 29 5M15 3v8M22 2v8" stroke="#8f8f30" stroke-width="2"/></svg><span>Stitching</span></a>
            <a href="#"><svg class="i20 lav" viewBox="0 0 32 32"><use href="#cube"/><path fill="#111" d="M5 11h4v4H5zM7 20h3v4H7zM16 5h4v3h-4zM17 16h4v4h-4zM24 12h4v4h-4zM20 23h4v4h-4zM26 21h3v3h-3zM9 6h3v3H9z"/></svg><span>Noise Shells</span></a>
            <a href="#"><svg class="i20 lav lav-hole"><use href="#cube"/></svg><span>Holes</span></a>
            <a href="#"><svg class="i20 lav" viewBox="0 0 32 32" fill="none" stroke="#3c3c8c" stroke-width="2"><path fill="#c3c8f4" d="M17 1 30 7V22L16 31 3 24V7z"/><path d="M3 7 16 13 30 7M16 13V31L3 7M16 31 30 7M22 4 16 13"/></svg><span>Triangles</span></a>
            <a href="#"><svg class="i20 lav" viewBox="0 0 32 32"><use href="#cube" width="28" height="28"/><use href="#cube" x="8" y="6" width="24" height="26"/></svg><span>Overlaps</span></a>
            <a href="#"><svg class="i20 lav"><use href="#cube"/></svg><span>Shells</span></a>
            <hr>
            <a href="#"><svg class="i20" viewBox="0 0 32 32"><path d="M8 2h12l7 7v21H8z" fill="#bfe9f5" stroke="#2c7c94" stroke-width="2"/><path d="M12 14h10M12 19h10M12 24h10" stroke="#234" stroke-width="2"/></svg><span>Profiles</span></a>
          </nav>

          <div class="dlg-main">
            <div class="current">
              <label for="part">Current Part:</label>
              <div class="select-wrap">
                <select id="part"><option>16</option></select>
                <svg width="9" height="6" viewBox="0 0 9 6"><path d="m0 1 4 4 4-4" fill="none" stroke="#555"/></svg>
              </div>
              <button class="btn next" disabled>Next</button>
            </div>
            <div class="page">
              <fieldset class="advice">
                <legend>Advice</legend>
                <p>No more errors are detected. It seems that the part is ok. Note that not all parameters were analysed.</p>
                <div class="mini-scroll"><i class="up"></i><i></i></div>
              </fieldset>
              <fieldset class="diag">
                <legend>Diagnostics</legend>
                <label class="full"><input type="checkbox">Full Analysis</label>
                <div class="rows">
                  <label><input type="checkbox" checked><svg class="i18"><use href="#tick"/></svg><b>0</b>inverted normals detected</label>
                  <label><input type="checkbox" checked><svg class="i18"><use href="#tick"/></svg><b>0</b>bad edges detected</label>
                  <div class="row sub nobox"><svg class="i18"><use href="#tick"/></svg><b>0</b>bad contours detected</div>
                  <label class="sub"><input type="checkbox" checked><svg class="i18"><use href="#tick"/></svg><b>0</b>near bad edges detected</label>
                  <label class="sub"><input type="checkbox" checked><svg class="i18"><use href="#tick"/></svg><b>0</b>planar holes detected</label>
                  <label><input type="checkbox" checked><svg class="i18"><use href="#tick"/></svg><b>1</b>shells detected</label>
                  <div class="row sub nobox"><svg class="i18"><use href="#tick"/></svg><b>0</b>possible noise shells detected</div>
                  <label><input type="checkbox"><i class="dot"></i><b></b>overlapping triangles detected</label>
                  <label><input type="checkbox"><i class="dot"></i><b></b>intersecting triangles detected</label>
                </div>
                <button class="btn update"><svg class="i20"><use href="#glass"/></svg><span>Update</span></button>
              </fieldset>
            </div>
            <div class="dlg-foot">
              <button class="btn follow"><svg width="22" height="18" viewBox="0 0 22 18"><path fill="#5ccb3c" stroke="#1f7a1a" stroke-width="2" stroke-linejoin="round" d="M1 6h9V1l10 8-10 8v-5H1z"/></svg><span>Follow Advice</span></button>
              <button class="btn">Close</button>
              <button class="btn">Help</button>
            </div>
          </div>
        </div>
        <svg class="grip" viewBox="0 0 12 12"><path d="M1 12 12 1M5 12l7-7M9 12l3-3" stroke="#999"/></svg>
      </section>
    </div>

    <div class="ruler">
      <svg class="ticks">
        <defs>
          <pattern id="cm" width="247.25" height="34" patternUnits="userSpaceOnUse">
            <path d="M.5 0v14M24.7 0v5M49.4 0v5M74.2 0v5M98.9 0v5M123.6 0v9M148.3 0v5M173 0v5M197.8 0v5M222.5 0v5" stroke="#5a7080"/>
          </pattern>
        </defs>
        <rect width="2104" height="34" fill="url(#cm)"/>
        <text x="5" y="29">0</text>
        <text x="246" y="29">1</text>
        <text x="493" y="29">2</text>
        <text x="740" y="29">3</text>
        <text x="988" y="29">4</text>
        <text x="1235" y="29">5</text>
        <text x="1482" y="29">6</text>
        <text x="1729" y="29">7</text>
        <text x="1977" y="29">8</text>
      </svg>
      <span>cm</span>
    </div>
  </div>

  <aside class="panels">
    <section class="panel">
      <h2><i class="open"></i>View Pages<i class="dots"></i><svg class="pin"><use href="#pin"/></svg><svg class="x"><use href="#cross"/></svg></h2>
      <div class="tabs wide"><a class="active" href="#">View</a><a href="#">Multi-Section</a><a href="#">Slices</a><a href="#">Grid</a></div>
      <fieldset class="vis">
        <legend>Visualization</legend>
        <div class="vis-list">
          <div><button aria-label="Shading mode"><svg class="i18 dark"><use href="#cube"/></svg><svg class="arr"><use href="#down"/></svg></button>Shade&amp;Wire</div>
          <div><button aria-label="Bad edges"><svg class="i18 green" viewBox="0 0 32 32"><path d="M19 1 30 27" stroke="#e6c820" stroke-width="2"/><use href="#tri"/></svg><svg class="arr"><use href="#down"/></svg></button>Bad Edges Visible</div>
          <div><button aria-label="Flipped triangles"><svg class="i18 green" viewBox="0 0 32 32"><path d="M20 4 31 26 15 29z" fill="#a34a3a"/><use href="#tri"/></svg><svg class="arr"><use href="#down"/></svg></button>Flipped Triangles Visible</div>
        </div>
        <button class="orient" aria-label="Orientation">
          <svg width="76" height="76" viewBox="0 0 76 76" fill="#2496f2" stroke="#2a4a68" stroke-linejoin="round"><path d="M1 8 42 1 75 13 30 22z"/><path d="M1 8 30 22V75L1 52z"/><path d="M30 22 75 13V60L30 75z"/></svg>
          <svg class="arr"><use href="#down"/></svg>
        </button>
      </fieldset>
    </section>

    <section class="panel grow">
      <h2><i class="open"></i>Part Pages<i class="dots"></i><svg class="pin"><use href="#pin"/></svg><svg class="x"><use href="#cross"/></svg></h2>
      <div class="tabs"><a class="active" href="#">Part List</a><a href="#">Part Info</a><a href="#">Part Fixing Info</a><a class="cut" href="#">Build Time Estimation</a><div class="pager"><button disabled aria-label="Previous"><i class="prev"></i></button><button aria-label="Next"><i></i></button></div></div>
      <div class="scene">
        <div class="combo">
          <svg class="i18 blue"><use href="#cubes"/></svg>
          <select aria-label="Scene"><option>Modeler Scene</option></select>
          <svg class="arr"><use href="#down"/></svg>
        </div>
        <span>Number of parts:&nbsp; 1</span>
      </div>
      <div class="list">
        <table>
          <colgroup><col class="c25"><col class="c25"><col class="c25"><col class="c35"><col class="c35"><col class="c25"><col class="c30"><col><col class="c55"></colgroup>
          <thead><tr><th>#</th><th>Sel</th><th>Visi</th><th>Sl&nbsp; ^</th><th>Trans</th><th>Col</th><th>Mem</th><th>Part Name</th><th>FixInfo</th></tr></thead>
          <tbody><tr>
            <td>1</td>
            <td><input type="checkbox" checked aria-label="Select part 16"></td>
            <td><svg class="i16"><use href="#eye"/></svg></td>
            <td class="mid-cell"><svg class="i16 dark"><use href="#cube"/></svg></td>
            <td class="mid-cell"><svg class="i16 pale" viewBox="0 0 32 32"><use href="#cube"/><path d="M3 30 29 3" stroke="#d9534f" stroke-width="2"/></svg></td>
            <td><svg class="i16" viewBox="0 0 16 16"><circle cx="8" cy="8" r="5" fill="#bbb" stroke="#000"/></svg></td>
            <td class="mid-cell"><svg class="i16 thin"><use href="#cube"/></svg></td>
            <td class="name">16</td>
            <td><svg class="i16" viewBox="0 0 16 16"><path d="m1 8 4 6L15 1" fill="none" stroke="#7cb342" stroke-width="3"/></svg></td>
          </tr></tbody>
        </table>
        <div class="hscroll"><button aria-label="Scroll left"><i class="prev"></i></button><span></span><button aria-label="Scroll right"><i></i></button></div>
      </div>
      <div class="part-tools">
        <button aria-label="Select all"><svg class="i24 blue" viewBox="0 0 32 32"><use href="#cubes"/><use href="#box"/></svg></button>
        <button aria-label="Select visible"><svg class="i24" viewBox="0 0 32 32"><use href="#eye" width="16" height="16"/><path fill="#3d9bdc" d="M19 3h11v9l-4-3z"/><use href="#box"/></svg></button>
        <button aria-label="Invert selection"><svg class="i24" viewBox="0 0 32 32"><path fill="#3a3a3a" d="M1 1h15v15H1z"/><path d="m4 8 3 4 6-8" stroke="#fff" stroke-width="2" fill="none"/><path d="M17 17h14v14H17z" fill="#fff" stroke="#444" stroke-width="2"/><path fill="#3d9bdc" d="M19 2h10l-3 3 4 5-4-1zM2 20l3 3 8 7H3z"/></svg></button>
        <i class="vsep"></i>
        <button aria-label="Show selected"><svg class="i24" viewBox="0 0 32 32"><g class="blue"><use href="#cube" x="0" y="0" width="19" height="19"/></g><use href="#cube" x="16" y="4" width="16" height="16"/><use href="#cube" x="5" y="14" width="17" height="17"/><use href="#eye" x="16" y="15" width="16" height="16"/></svg></button>
        <button aria-label="Hide selected"><svg class="i24" viewBox="0 0 32 32"><use href="#cubes"/><circle cx="24" cy="23" r="5" fill="#ddd"/></svg></button>
        <i class="vsep"></i>
        <button aria-label="Unload"><svg class="i24" viewBox="0 0 32 32"><use href="#cube"/><use href="#redx"/></svg></button>
        <i class="vsep"></i>
        <button aria-label="Color parts"><svg class="i24" viewBox="0 0 32 32"><g class="green"><use href="#cube" x="1" y="0" width="17" height="17"/></g><g class="orange"><use href="#cube" x="15" y="4" width="16" height="17"/></g><g class="blue"><use href="#cube" x="4" y="13" width="18" height="18"/></g><path d="m13 8 17 23" stroke="#333" stroke-width="3"/></svg></button>
        <i class="vsep"></i>
        <button aria-label="Duplicate"><svg class="i24 gray" viewBox="0 0 32 32"><use href="#cube" width="15" height="15"/><path class="fa" d="m6 14 13-5 12 14-14 7z"/></svg></button>
        <button aria-label="Platform"><svg class="i24 orange" viewBox="0 0 32 32"><path class="fa" d="m1 12 19-5 11 15-18 6z"/></svg></button>
        <button aria-label="Save part"><svg class="i24 gray" viewBox="0 0 32 32"><use href="#cube"/><use href="#floppy"/></svg></button>
        <i class="vsep"></i>
        <button aria-label="Save list"><svg class="i24" viewBox="0 0 32 32"><path d="M4 1v28M0 25l4 5 4-5M8 2h23M10 8h18M12 14h12" stroke="#999" stroke-width="2" fill="none"/><use href="#floppy"/></svg></button>
      </div>
    </section>

    <section class="panel">
      <h2><i class="closed"></i>Annotation Pages<i class="dots"></i><svg class="x"><use href="#cross"/></svg></h2>
      <div class="tabs wide"><a class="active" href="#">Text</a><a href="#">Drawing</a><a href="#">Attachments</a><a href="#">Textures</a></div>
    </section>
    <section class="panel">
      <h2><i class="closed"></i>Measurement Pages<i class="dots"></i><svg class="x"><use href="#cross"/></svg></h2>
      <div class="tabs"><a class="active" href="#">Distance</a><a href="#">Circle</a><a href="#">Angle</a><a href="#">Info</a><a href="#">Final Part</a><a href="#">Report</a></div>
    </section>
    <section class="panel">
      <h2><i class="closed"></i>Fix Pages<i class="dots"></i><svg class="x"><use href="#cross"/></svg></h2>
      <div class="tabs"><a class="active" href="#">Autofix</a><a href="#">Basic</a><a href="#">Hole</a><a href="#">Triangle</a><a href="#">Shell</a><a href="#">Overlap</a><a class="cut" href="#">P</a><div class="pager"><button disabled aria-label="Previous"><i class="prev"></i></button><button aria-label="Next"><i></i></button></div></div>
    </section>
  </aside>
</main>

<footer>Ready</footer>

</body>
</html>
```
FILE: styles.css
```css
:root {
  --line: #c8c8c8;
  --text: #222;
  --accent: #2a98ff;
  --sky: #bbdefb;
  --edge: #3c3c3c;
}

* {
  box-sizing: border-box;
}

body {
  margin: 0;
  height: 100vh;
  display: flex;
  flex-direction: column;
  overflow: hidden;
  background: #fff;
  color: var(--text);
  font: 11px/13px "Noto Sans", "Open Sans", sans-serif;
}

button, input, select {
  font: inherit;
  color: inherit;
}

button {
  border: 0;
  padding: 0;
  background: none;
}

a {
  color: inherit;
  text-decoration: none;
}

svg {
  display: block;
  flex: none;
}

.defs {
  position: absolute;
  width: 0;
  height: 0;
}

/* icon sizes */
.i16 { width: 16px; height: 16px; }
.i18 { width: 18px; height: 18px; }
.i20 { width: 20px; height: 20px; }
.i22 { width: 22px; height: 22px; }
.i24 { width: 24px; height: 24px; }
.i32 { width: 32px; height: 32px; }
.arr { width: 6px; height: 4px; fill: #666; }

/* icon faces */
.ft { fill: var(--t, #fff); }
.fl { fill: var(--l, #fff); }
.fr { fill: var(--r, #fff); }
.fa { fill: var(--a, #fff); }
.fb { fill: var(--b, #fff); }
.ft, .fl, .fr, .fa, .fb {
  stroke: var(--s, var(--edge));
  stroke-width: 2;
  stroke-linejoin: round;
}

.green { --t: #9ccc65; --l: #7cb342; --r: #8bc34a; --a: #8bc34a; --b: #6ea53c; }
.blue { --t: #4a9fdc; --l: #2b7fc0; --r: #2f8fd6; --s: #1b4468; }
.red { --t: #c94545; --l: #a83232; --r: #b83838; --s: #5c1a1a; }
.orange { --t: #f5a623; --l: #e8961a; --r: #f0a020; --a: #f5a01a; }
.dark { --t: #444; --l: #777; --r: #aaa; }
.pale { --t: #ddd; --l: #f5c9c2; --r: #d5d5d5; --s: #888; }
.thin { --s: #777; }
.ghost { --s: #9a9a9a; --a: #fff; }
.gray { --t: #ddd; --l: #bbb; --r: #ccc; --a: #c4c4c4; --b: #ddd; --s: #8c8c8c; }
.mid { --a: #b5b5b5; }
.light { --a: #fff; --b: #c9dbe8; }
.redb { --b: #d9453c; }
.blueb { --b: #2b80c4; }
.right-red { --r: #e53935; }
.right-blue { --r: #2b95f0; }
.right-navy { --r: #2476b8; --t: #ddd; --l: #ccc; }
.top-green { --t: #8bc34a; }
.side-green { --l: #8bc34a; --r: #8bc34a; }
.multi { --t: #f5a01a; --l: #2b95e0; --r: #8bc34a; }
.lav { --t: #e6e8fc; --l: #b9c4ee; --r: #cdd0f5; --s: #5b6ba0; }
.lav-red { --r: #c62828; }
.lav-top { --t: #e3e0a0; }
.lav-hole { --t: #a31f3a; }
.grid { stroke: #333; }
.gray use[href="#cursor"], .ghost use[href="#cursor"] { opacity: 0.5; }

.vsep {
  flex: none;
  width: 1px;
  margin: 0 3px 0 2px;
  align-self: stretch;
  background: #ddd;
}

/* title bar */
.titlebar {
  height: 28px;
  display: grid;
  grid-template-columns: 1fr auto 1fr;
}

.titlebar h1 {
  margin: 0;
  padding-top: 7px;
  font-size: 11px;
  font-weight: normal;
  color: #000;
}

.quick {
  display: flex;
  align-items: center;
  height: 24px;
  margin-left: 3px;
}

.quick button {
  width: 23px;
  height: 22px;
  display: flex;
  align-items: center;
  justify-content: center;
}

.quick .drop {
  width: 32px;
  gap: 3px;
}

.quick .on {
  background: #92c0e0;
}

.off .arr {
  fill: #bbb;
}

.search {
  width: 200px;
  height: 20px;
  margin-top: 2px;
  padding: 0 2px;
  border: 1px solid #999;
}

.search::placeholder {
  color: #666;
}

.winbtns {
  justify-self: end;
  display: flex;
  padding-right: 1px;
}

.winbtns button {
  width: 36px;
  display: flex;
  justify-content: center;
  padding-top: 7px;
}

.winbtns svg {
  width: 9px;
  height: 9px;
  fill: none;
  stroke: #555;
}

/* ribbon tabs */
.menu {
  height: 24px;
  display: flex;
  border-bottom: 1px solid var(--line);
  color: #000;
}

.menu a {
  padding: 6px 11px 0;
  height: 24px;
}

.menu .file {
  width: 52px;
  height: 23px;
  margin-right: 2px;
  padding: 6px 0 0;
  text-align: center;
  background: var(--accent);
  color: #fff;
}

.menu .active {
  padding: 5px 10px 0;
  border: 1px solid var(--line);
  border-bottom: 0;
  background: #fff;
  color: #1b5e97;
}

.menu-right {
  margin-left: auto;
  display: flex;
  align-items: center;
  gap: 6px;
  padding-right: 7px;
}

/* ribbon */
.ribbon {
  height: 91px;
  display: flex;
  border-bottom: 1px solid var(--line);
  color: #3a3a3a;
}

.group {
  display: flex;
  flex-direction: column;
  padding: 7px 5px 0 7px;
  margin-bottom: 2px;
  border-right: 1px solid var(--line);
}

.group:first-child {
  padding: 7px 7px 0 9px;
}

.group:last-child {
  padding-right: 9px;
}

.tools {
  flex: 1;
  display: flex;
}

.caption {
  height: 16px;
  text-align: center;
}

.big {
  display: flex;
  flex-direction: column;
  align-items: center;
  align-self: flex-start;
  padding: 0 4px 0 5px;
}

.big svg {
  margin-bottom: 4px;
}

.tsep {
  width: 1px;
  margin: 0 13px 0 4px;
  background: var(--line);
  height: 64px;
}

.stack {
  display: flex;
  flex-direction: column;
  margin-top: -2px;
}

.stack button {
  height: 22px;
  display: flex;
  align-items: center;
  gap: 4px;
}

.stack + .tsep {
  margin-left: 12px;
}

.stack:last-child {
  margin-right: 13px;
}

/* workspace */
.workspace {
  flex: 1;
  min-height: 0;
  display: flex;
}

.left {
  flex: 1;
  min-width: 0;
  display: flex;
  flex-direction: column;
}

.toolbar {
  height: 35px;
  padding: 5px 0 5px 5px;
  margin-left: 3px;
  display: flex;
  align-items: center;
  border-left: 2px dotted #333;
}

.toolbar button {
  width: 31px;
  display: flex;
  justify-content: center;
}

.viewport {
  flex: 1;
  position: relative;
  background: var(--sky);
}

.wcs {
  position: absolute;
  left: 511px;
  top: 404px;
  width: 260px;
  height: 220px;
  overflow: visible;
  font: 14px "Liberation Sans", sans-serif;
}

.model {
  position: absolute;
  left: 1420px;
  top: 392px;
  width: 220px;
  height: 280px;
}

.gizmo {
  position: absolute;
  right: 22px;
  bottom: 147px;
  width: 200px;
  height: 130px;
  overflow: visible;
  font: 14px "Liberation Sans", sans-serif;
}

.ruler {
  height: 35px;
  display: flex;
  border-top: 1px solid #5a7080;
  border-bottom: 1px solid #a5e0fa;
  background: linear-gradient(#ecf6ff, #bfdcfa);
  color: #000;
  font: 13px/17px "Liberation Sans", sans-serif;
}

.ticks {
  flex: 1;
  min-width: 0;
  height: 33px;
  font-size: 12px;
  text-anchor: middle;
}

.ruler span {
  padding: 9px 12px 0;
}

/* dialog window */
.dialog {
  position: absolute;
  left: 721px;
  top: 92px;
  bottom: 127px;
  width: 614px;
  display: flex;
  flex-direction: column;
  border: 1px solid #8ea6ba;
  border-radius: 7px 7px 2px 2px;
  background: #f0f0f0;
  box-shadow: 0 14px 34px rgba(30, 60, 95, 0.55), 0 0 12px rgba(30, 60, 95, 0.2);
  color: #000;
}

.dlg-title {
  height: 32px;
  display: flex;
  align-items: center;
  padding: 0 0 3px 7px;
  gap: 5px;
  border-radius: 7px 7px 0 0;
  background: #f9f1ef;
}

.dlg-btns {
  margin-left: auto;
  display: flex;
}

.dlg-btns button {
  width: 45px;
  display: flex;
  justify-content: center;
}

.dlg-btns svg {
  width: 12px;
  height: 12px;
  fill: none;
  stroke: #111;
}

.dlg-btns button:disabled svg {
  stroke: #ccc;
}

.dlg-body {
  flex: 1;
  display: flex;
  padding: 2px 7px 3px 3px;
}

.steps {
  width: 121px;
  padding: 1px 3px 0 1px;
  border: 2px solid #808080;
  border-right-width: 3px;
  border-right-style: double;
  border-bottom-width: 1px;
  background: #fff;
}

.steps a {
  height: 21px;
  display: flex;
  align-items: center;
  padding-left: 3px;
  gap: 2px;
}

.steps span {
  flex: 1;
  padding: 4px 2px;
}

.steps .sel span {
  background: #f0f0f0;
}

.steps hr {
  margin: 10px 0;
  border: 0;
  border-top: 1px solid #808080;
}

.dlg-main {
  flex: 1;
  display: flex;
  flex-direction: column;
  padding-left: 8px;
}

.current {
  display: flex;
  align-items: flex-start;
  margin-bottom: 10px;
  padding-left: 2px;
}

.current label {
  width: 75px;
}

.select-wrap {
  flex: 1;
  display: flex;
  align-items: center;
  height: 21px;
  padding-right: 4px;
  border: 1px solid #bbb;
  border-radius: 2px;
  background: #fff;
}

select {
  flex: 1;
  min-width: 0;
  height: 18px;
  padding: 0 3px;
  border: 0;
  background: none;
  appearance: none;
}

.btn {
  height: 24px;
  width: 58px;
  border: 1px solid #d0d0d0;
  border-radius: 4px;
  background: #fdfdfd;
}

.next {
  width: 43px;
  height: 22px;
  margin-left: 6px;
  border-color: #e6e6e6;
  background: #f6f6f6;
  color: #999;
}

.page {
  height: 382px;
  padding: 19px 9px 9px;
  border: 1px solid #a0a0a0;
  border-radius: 4px;
  background: linear-gradient(#fff, #f0f0f0);
}

fieldset {
  min-width: 0;
  margin: 0;
  padding: 0;
  border: 1px solid #dcdcdc;
}

legend {
  padding: 0 2px;
}

.advice {
  height: 75px;
  display: flex;
  padding: 7px 9px 0 12px;
}

.advice legend {
  margin-left: -5px;
}

.advice p {
  flex: 1;
  margin: 0;
  padding-right: 20px;
}

.mini-scroll {
  width: 16px;
  height: 46px;
  display: flex;
  flex-direction: column;
  justify-content: space-between;
  align-items: center;
  padding: 6px 0;
  background: #f1f1f1;
}

.mini-scroll i {
  width: 9px;
  height: 7px;
  background: #999;
  clip-path: polygon(0 0, 100% 0, 50% 100%);
}

.mini-scroll .up {
  clip-path: polygon(50% 0, 100% 100%, 0 100%);
}

.diag {
  height: 272px;
  margin-top: 5px;
  padding: 8px 9px 0 9px;
  display: flex;
  flex-direction: column;
}

.diag legend {
  margin-left: -2px;
}

.full {
  display: flex;
  align-items: center;
  gap: 3px;
}

input[type="checkbox"] {
  flex: none;
  width: 13px;
  height: 13px;
  margin: 0;
  appearance: none;
  border: 1px solid #666;
  border-radius: 3px;
  background: #fff;
}

input[type="checkbox"]:checked {
  border-color: #0f5a9c;
  background: #0f5a9c;
}

input[type="checkbox"]:checked::after {
  content: "";
  display: block;
  width: 6px;
  height: 3px;
  margin: 3px 0 0 3px;
  border: 1px solid #fff;
  border-top: 0;
  border-right: 0;
  transform: rotate(-45deg);
}

.rows {
  margin: 12px 0 0 20px;
}

.rows label, .row {
  height: 20px;
  display: flex;
  align-items: center;
}

.rows svg {
  margin-left: 6px;
}

.rows b {
  width: 48px;
  padding-left: 3px;
}

.rows .sub {
  padding-left: 20px;
}

.rows .nobox {
  padding-left: 33px;
}

.dot {
  width: 3px;
  height: 3px;
  margin: 0 7px 0 14px;
  background: #2a3fa0;
}

.update {
  align-self: flex-end;
  width: 111px;
  height: 25px;
  margin-top: 11px;
  display: flex;
  align-items: center;
  padding: 0 4px 0 3px;
  border-color: #1f6e96;
}

.btn span {
  flex: 1;
  text-align: center;
}

.update span {
  padding-right: 6px;
}

.dlg-foot {
  display: flex;
  gap: 7px;
  margin-top: auto;
  justify-content: flex-end;
  padding: 0 12px 1px 0;
}

.follow {
  width: 150px;
  height: 25px;
  display: flex;
  align-items: center;
  padding-left: 3px;
}

.follow span {
  padding-right: 8px;
}

.grip {
  position: absolute;
  right: 0;
  bottom: 0;
  width: 11px;
  height: 11px;
}

/* side panels */
.panels {
  position: relative;
  width: 390px;
  display: flex;
  flex-direction: column;
  padding-left: 5px;
  color: #111;
}

/* splitter handle */
.panels::before {
  content: "";
  position: absolute;
  left: 0;
  top: 633px;
  width: 3px;
  height: 11px;
  border: solid #333;
  border-width: 4px 0;
}

.panel {
  padding: 0 2px;
  border: 1px solid #ececec;
  border-width: 2px 0 0 1px;
}

.panel.grow {
  flex: 1;
  min-height: 0;
  display: flex;
  flex-direction: column;
}

.panel h2 {
  height: 26px;
  margin: 0;
  padding: 0 6px 4px 4px;
  display: flex;
  align-items: center;
  font-size: 11px;
  font-weight: normal;
}

.open, .closed {
  flex: none;
  width: 11px;
  height: 7px;
  margin-right: 11px;
  background: #000;
  clip-path: polygon(0 0, 100% 0, 50% 100%);
}

.closed {
  width: 7px;
  height: 11px;
  margin-right: 13px;
  margin-left: 2px;
  clip-path: polygon(0 0, 100% 50%, 0 100%);
}

.dots {
  flex: 1;
  height: 6px;
  margin: 0 9px 0 6px;
  background: radial-gradient(#555 1px, transparent 1px) 0 0 / 4px 4px, radial-gradient(#555 1px, transparent 1px) 2px 2px / 4px 4px;
}

.pin {
  width: 9px;
  height: 9px;
  margin-right: 12px;
}

.x {
  width: 7px;
  height: 7px;
}

.tabs {
  height: 19px;
  display: flex;
  overflow: hidden;
}

.tabs a {
  padding: 3px 12px 0 11px;
  white-space: nowrap;
}

.tabs .active {
  padding: 2px 12px 0 9px;
  border: 1px solid #999;
  border-bottom: 0;
}

.tabs .cut {
  flex: 1 1 0;
  min-width: 0;
  margin-left: 11px;
  padding: 3px 0 0;
  overflow: hidden;
}

.wide a {
  min-width: 72px;
  padding: 3px 12px 0;
  text-align: center;
}

.pager {
  display: flex;
}

.pager button {
  width: 16px;
  display: flex;
  align-items: center;
  justify-content: center;
}

.pager i, .hscroll i {
  width: 6px;
  height: 10px;
  background: #000;
  clip-path: polygon(0 0, 100% 50%, 0 100%);
}

.pager .prev, .hscroll .prev {
  clip-path: polygon(100% 0, 100% 100%, 0 50%);
}

.pager .prev {
  background: #999;
}

.pager button:enabled {
  border: 1px solid #999;
}

.vis {
  display: flex;
  margin: 4px 3px 5px 2px;
  padding: 10px 8px 8px 9px;
  border-color: #e2e2e2;
}

.vis legend {
  margin-left: -3px;
}

.vis-list {
  flex: 1;
  display: flex;
  flex-direction: column;
  gap: 6px;
}

.vis-list div {
  display: flex;
  align-items: center;
  gap: 6px;
}

.vis-list button {
  width: 33px;
  height: 22px;
  display: flex;
  align-items: center;
  justify-content: space-between;
  padding: 0 2px;
  border: 1px solid #999;
}

.orient {
  width: 97px;
  height: 86px;
  display: flex;
  align-items: center;
  justify-content: space-between;
  padding: 0 2px 0 6px;
  border: 1px solid #999;
}

.scene {
  display: flex;
  align-items: center;
  gap: 6px;
  margin: 4px 0 6px 2px;
  white-space: nowrap;
}

.combo {
  width: 270px;
  height: 22px;
  display: flex;
  align-items: center;
  padding: 0 5px 0 3px;
  border: 1px solid #999;
}

.list {
  flex: 1;
  min-height: 0;
  display: flex;
  flex-direction: column;
  margin: 0 2px;
  border: 1px solid #888;
}

table {
  width: 100%;
  table-layout: fixed;
  border-collapse: collapse;
}

.c25 { width: 25px; }
.c30 { width: 30px; }
.c35 { width: 35px; }
.c55 { width: 55px; }

th, td {
  height: 20px;
  padding: 0 1px 0 4px;
  overflow: hidden;
  white-space: nowrap;
  text-align: left;
  font-weight: normal;
}

th {
  height: 21px;
  border: solid #e4e4e4;
  border-width: 0 1px 1px 0;
}

.mid-cell svg {
  margin: 0 auto;
}

td.name {
  padding-left: 14px;
}

td input[type="checkbox"], td input[type="checkbox"]:checked {
  display: block;
  border: 1px solid #333;
  border-radius: 0;
  background: #fff;
}

td input[type="checkbox"]:checked::after {
  border-color: #333;
}

.hscroll {
  height: 17px;
  margin-top: auto;
  display: flex;
  border-top: 1px solid #888;
  background: #eee;
}

.hscroll button {
  width: 17px;
  display: flex;
  align-items: center;
  justify-content: center;
  background: #fff;
}

.hscroll i {
  background: #666;
}

.hscroll span {
  flex: 1;
  margin-right: 39px;
  border: solid #888;
  border-width: 0 1px;
  background: #fff;
}

.hscroll button:last-child {
  border-left: 1px solid #888;
}

.part-tools {
  height: 45px;
  display: flex;
  align-items: center;
  justify-content: space-between;
  padding: 2px 6px 0 6px;
}

.part-tools .vsep {
  height: 24px;
  margin: 0;
  align-self: center;
}

footer {
  height: 19px;
  padding: 4px 6px 0;
  background: var(--accent);
  color: #d9f3ff;
}
```
